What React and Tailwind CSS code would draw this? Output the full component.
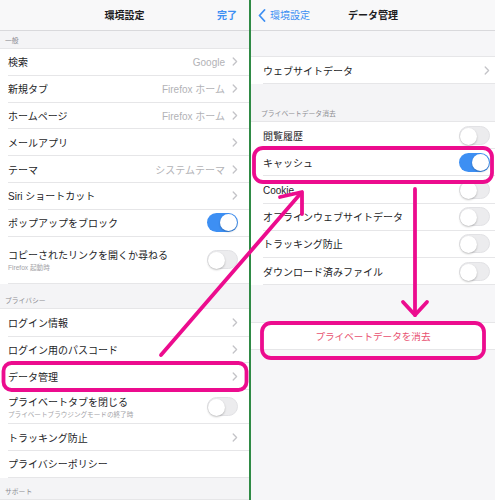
import React from "react";

const PINK = "#ec0c8e";

function Chevron() {
  return (
    <svg width="6" height="9" viewBox="0 0 6 9" className="shrink-0">
      <path d="M1.2 1 L4.6 4.5 L1.2 8" fill="none" stroke="#c4c4c8" strokeWidth="1.3" strokeLinecap="round" strokeLinejoin="round" />
    </svg>
  );
}

function Toggle({ on }) {
  return (
    <div
      className={`relative h-[19px] w-[31px] shrink-0 rounded-full ${
        on ? "bg-[#3d8ff3]" : "border border-[#e2e2e5] bg-[#ececee]"
      }`}
    >
      <div
        className={`absolute top-[1px] h-[17px] w-[17px] rounded-full bg-white shadow-[0_1px_2px_rgba(0,0,0,0.25)] ${
          on ? "right-[1px]" : "left-[0px] top-[0px]"
        }`}
      />
    </div>
  );
}

function Row({ label, sub, value, chevron, toggle, h = "h-[26.8px]", inset }) {
  return (
    <div className={`flex items-center bg-white ${h} ${inset ? "pl-[12px]" : "pl-[8px]"}`}>
      <div
        className={`flex h-full flex-1 items-center border-b border-[#e6e6e8] ${
          inset ? "pr-[5px]" : "pr-[11px]"
        }`}
      >
        <div className="relative top-[1px] flex flex-1 flex-col justify-center">
          <span className="text-[10px] leading-[13px] text-[#1d1d1f]">{label}</span>
          {sub && <span className="mt-[1px] text-[6.6px] leading-[9px] text-[#a3a3a7]">{sub}</span>}
        </div>
        {value && <span className="relative top-[1px] mr-[7px] text-[10px] text-[#b2b2b6]">{value}</span>}
        {chevron && <Chevron />}
        {toggle !== undefined && <Toggle on={toggle} />}
      </div>
    </div>
  );
}

function Section({ label, h, inset }) {
  return (
    <div
      className={`flex items-end bg-[#f4f4f6] pb-[3px] ${h} ${inset ? "pl-[10px]" : "pl-[5px]"} border-b border-[#e6e6e8]`}
    >
      <span className="text-[6.8px] leading-[9px] text-[#8d8d92]">{label}</span>
    </div>
  );
}

function LeftPanel() {
  return (
    <div className="flex w-[249px] shrink-0 flex-col bg-[#f4f4f6]">
      <div className="relative flex h-[31px] items-center justify-center border-b border-[#d9d9dc] bg-[#f8f8f9]">
        <span className="text-[10px] font-bold text-[#1d1d1f]">環境設定</span>
        <span className="absolute right-[12px] text-[10px] font-semibold text-[#3d8ff3]">完了</span>
      </div>
      <Section label="一般" h="h-[18px]" />
      <Row label="検索" value="Google" chevron />
      <Row label="新規タブ" value="Firefox ホーム" chevron />
      <Row label="ホームページ" value="Firefox ホーム" chevron />
      <Row label="メールアプリ" chevron />
      <Row label="テーマ" value="システムテーマ" chevron />
      <Row label="Siri ショートカット" chevron />
      <Row label="ポップアップをブロック" toggle={true} />
      <Row label="コピーされたリンクを開くか尋ねる" sub="Firefox 起動時" toggle={false} h="h-[47px]" />
      <Section label="プライバシー" h="h-[25px]" />
      <Row label="ログイン情報" chevron h="h-[28px]" />
      <Row label="ログイン用のパスコード" chevron />
      <Row label="データ管理" chevron />
      <Row label="プライベートタブを閉じる" sub="プライベートブラウジングモードの終了時" toggle={false} h="h-[34px]" />
      <Row label="トラッキング防止" chevron />
      <Row label="プライバシーポリシー" />
      <Section label="サポート" h="h-[22px]" />
    </div>
  );
}

function RightPanel() {
  return (
    <div className="flex flex-1 flex-col bg-[#f6f6f8]">
      <div className="relative flex h-[31px] items-center justify-center border-b border-[#d9d9dc] bg-[#f8f8f9]">
        <div className="absolute left-[7px] flex items-center gap-[4px]">
          <svg width="8" height="13" viewBox="0 0 8 13">
            <path d="M6.5 1 L1.5 6.5 L6.5 12" fill="none" stroke="#3d8ff3" strokeWidth="1.8" strokeLinecap="round" strokeLinejoin="round" />
          </svg>
          <span className="text-[10px] text-[#3d8ff3]">環境設定</span>
        </div>
        <span className="text-[10px] font-bold text-[#1d1d1f]">データ管理</span>
      </div>
      <div className="h-[26px] border-b border-[#e6e6e8]" />
      <Row label="ウェブサイトデータ" chevron inset h="h-[27px]" />
      <Section label="プライベートデータ消去" h="h-[38px]" inset />
      <Row label="閲覧履歴" toggle={false} inset h="h-[27.2px]" />
      <Row label="キャッシュ" toggle={true} inset h="h-[27.2px]" />
      <Row label="Cookie" toggle={false} inset h="h-[27.2px]" />
      <Row label="オフラインウェブサイトデータ" toggle={false} inset h="h-[27.2px]" />
      <Row label="トラッキング防止" toggle={false} inset h="h-[27.2px]" />
      <Row label="ダウンロード済みファイル" toggle={false} inset h="h-[27.2px]" />
      <div className="h-[38px] border-b border-[#e6e6e8]" />
      <div className="flex h-[27px] items-center justify-center border-b border-[#e6e6e8] bg-white">
        <span className="relative top-[1px] text-[9.6px] text-[#e8506f]">プライベートデータを消去</span>
      </div>
    </div>
  );
}

function Annotations() {
  return (
    <svg className="pointer-events-none absolute left-0 top-0" width="495" height="500" viewBox="0 0 495 500">
      <g fill="none" stroke={PINK} strokeWidth="3.8" strokeLinecap="round" strokeLinejoin="round">
        <rect x="3.5" y="363" width="243" height="27" rx="8" />
        <rect x="254" y="148" width="238" height="34" rx="9" />
        <rect x="262" y="323" width="222" height="35" rx="9" />
        <path d="M161 355 L301 193" />
        <path d="M280 197 L302 192 L302 214" />
        <path d="M415 189 L415 315" />
        <path d="M403 302 L415 315 L427 302" />
      </g>
    </svg>
  );
}

export default function App() {
  return (
    <div className="relative h-[500px] w-[495px] overflow-hidden font-['Liberation_Sans','Noto_Sans_CJK_JP',sans-serif]">
      <div className="flex h-full">
        <LeftPanel />
        <div className="w-[2px] shrink-0 bg-[#2f8a45]" />
        <RightPanel />
      </div>
      <Annotations />
    </div>
  );
}
